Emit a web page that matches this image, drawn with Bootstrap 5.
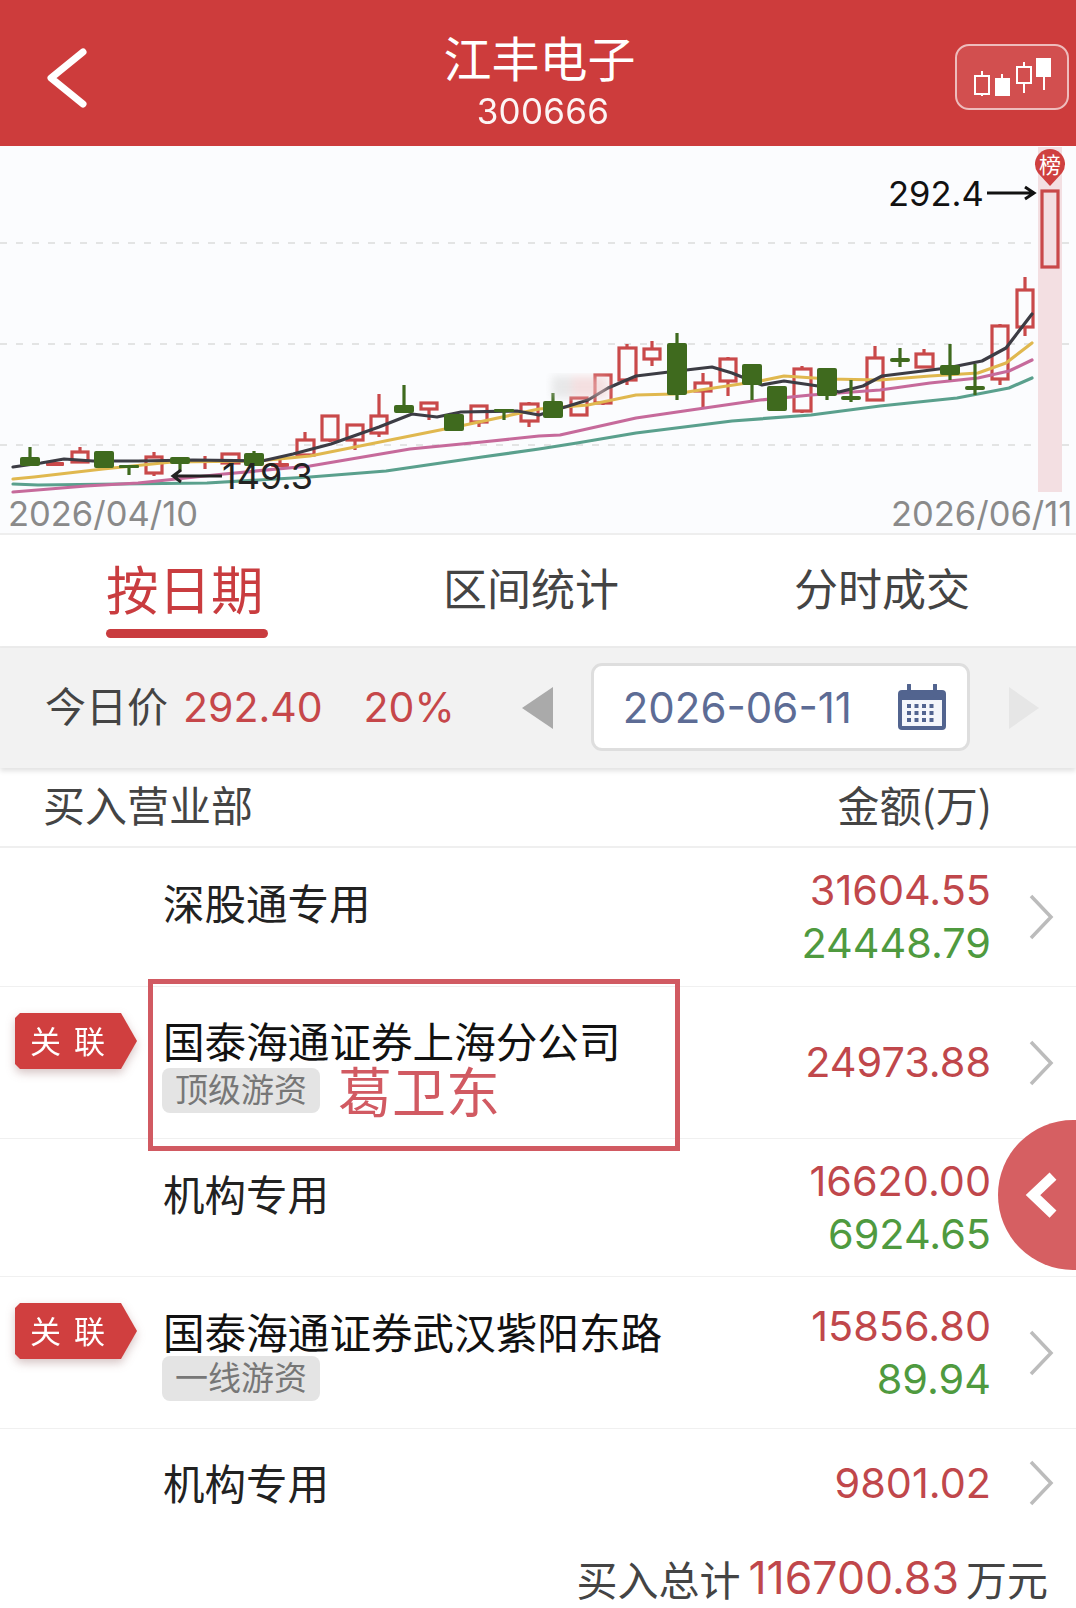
<!DOCTYPE html>
<html lang="zh">
<head>
<meta charset="utf-8">
<title>江丰电子</title>
<link href="https://cdn.jsdelivr.net/npm/bootstrap@5.3.0/dist/css/bootstrap.min.css" rel="stylesheet">
<style>
html,body{margin:0;background:#fff}
body{width:1076px;height:1608px;overflow:hidden;position:relative;font-family:Inter,"Noto Sans CJK SC",sans-serif;color:#222}
.top-bar{height:146px;background:#cd3c3c;color:#fff;position:relative}
.back-ic{margin-left:46px;margin-top:10px;width:44px;height:60px}
.title-box{position:absolute;left:0;right:0;top:26px;text-align:center}
.title-main{font-size:48px;line-height:60px;margin-left:3px;font-family:"Noto Sans CJK SC",sans-serif}
.title-code{font-size:35px;line-height:40px;margin-top:5px;margin-left:10px;letter-spacing:.3px;opacity:.95}
.kline-btn{margin-left:auto;margin-right:7px;width:114px;height:66px;border:2px solid #eebcbc;border-radius:14px;background:rgba(255,255,255,.1);margin-top:8px;position:relative;z-index:1}
.chart-wrap{height:389px;background:#fbfcfe;border-bottom:2px solid #eeeeee}
.chart-wrap svg{display:block}
.chart-wrap text{font-family:Inter,sans-serif}
.tab-bar{height:113px;background:#fff;border-bottom:2px solid #ececec}
.tab-item{position:absolute;font-size:44px;line-height:60px;top:557px;color:#444;font-family:"Noto Sans CJK SC",sans-serif}
.tab-on{left:106px;font-size:52.5px;line-height:60px;color:#c93c3f}
.tab-on::after{content:"";position:absolute;left:0;right:-4px;top:72px;height:9px;border-radius:5px;background:#c93c3f}
.tab-two{left:443px}
.tab-three{left:794px}
.price-bar{height:120px;background:#f2f2f2;box-shadow:0 3px 5px rgba(0,0,0,.12);position:relative;padding-left:45px}
.price-lbl{font-size:41px;color:#444;font-family:"Noto Sans CJK SC",sans-serif;margin-bottom:6px}
.price-val{font-size:41px;color:#c6474a;margin-left:15px}
.price-pct{font-size:41px;color:#c6474a;margin-left:41px}
.tri-l{width:0;height:0;border-top:21px solid transparent;border-bottom:21px solid transparent;border-right:31px solid #aaa;margin-left:67px}
.tri-r{width:0;height:0;border-top:21px solid transparent;border-bottom:21px solid transparent;border-left:30px solid #e6e6e6;margin-left:39px}
.date-box{width:379px;height:88px;margin-left:38px;background:#fff;border:3px solid #dedede;border-radius:11px;padding-left:29px;padding-right:21px;margin-bottom:2px}
.date-txt{font-size:42px;color:#5d6c95}
.head-row{height:80px;padding:0 84px 8px 43px;font-size:42px;color:#444;border-bottom:2px solid #efefef;font-family:"Noto Sans CJK SC",sans-serif}
.broker{border:0;border-bottom:2px solid #f0f0f0;border-radius:0;padding:0;padding-right:22px;position:relative;background:#fff}
.h139{height:139px}.h152{height:152px}.h138{height:138px}.h108{height:108px}
.lead-col{width:163px;flex:none;align-self:flex-start}
.assoc{width:122px;height:56px;margin-left:15px;margin-top:26px;filter:drop-shadow(0 4px 5px rgba(120,60,60,.3))}
.assoc-in{width:122px;height:56px;background:#d03f3f;color:#fff;font-size:31px;line-height:54px;padding-left:15px;clip-path:polygon(5px 0,106px 0,122px 28px,106px 56px,5px 56px,0 51px,0 5px);font-family:"Noto Sans CJK SC",sans-serif;word-spacing:6px}
.bk-name{font-size:41.5px;line-height:50px;color:#222;font-family:"Noto Sans CJK SC",sans-serif;white-space:nowrap}
.bk-up{margin-bottom:30px}
.bk-up-s{margin-bottom:2px}
.bk-long{font-size:41.6px;color:#111;margin-top:28px;line-height:50px}
.bk-long-b{margin-top:29px}
.bk-tag{width:158px;height:45px;background:#e4e4e4;border-radius:8px;color:#777;font-size:33px;line-height:41px;text-align:center;font-family:"Noto Sans CJK SC",sans-serif;margin-left:-1px;flex:none}
.bk-who{font-size:54px;line-height:50px;color:#d15a62;margin-left:18px;font-family:"Noto Sans CJK SC",sans-serif}
.num-col{margin-left:auto;text-align:right;font-size:41.4px;line-height:53px;flex:none}
.num-r{color:#c0474b}
.num-g{color:#4f9a3f}
.chev{width:26px;height:48px;margin-left:37px;flex:none}
.sum-row{height:71px;padding-right:28px;padding-top:12px;font-size:41px;color:#444;font-family:"Noto Sans CJK SC",sans-serif}
.sum-val{font-family:Inter,sans-serif;color:#c0474b;font-size:44.6px;margin:0 7px 0 8px}
.mark-box{position:absolute;left:148px;top:979px;width:532px;height:172px;border:5px solid #d15a62;pointer-events:none}
.float-tab{position:absolute;right:0;top:1120px;width:78px;height:150px;border-radius:75px 0 0 75px;background:#d65f62}
</style>
</head>
<body>
<header class="top-bar d-flex align-items-center">
  <svg class="back-ic" viewBox="0 0 44 60"><path d="M37 4 5 30 37 56" fill="none" stroke="#fff" stroke-width="7" stroke-linecap="round" stroke-linejoin="round"/></svg>
  <div class="title-box">
    <div class="title-main">江丰电子</div>
    <div class="title-code">300666</div>
  </div>
  <div class="kline-btn">
    <svg width="110" height="62" viewBox="957 47 110 62">
      <g fill="none" stroke="#fff" stroke-width="2"><rect x="975" y="77" width="14" height="18"/><path d="M982 72v5M982 95v2M1024 63v5M1024 84v10M1044 78v13"/><rect x="1017" y="68" width="14" height="16"/></g>
      <rect x="995" y="79" width="15" height="18" fill="#fff"/><path d="M1002 75v4" stroke="#fff" stroke-width="2"/>
      <rect x="1036" y="59" width="15" height="19" fill="#fff"/>
    </svg>
  </div>
</header>

<section class="chart-wrap">
  <svg width="1076" height="387" viewBox="0 146 1076 387">
    <defs><filter id="smear"><feGaussianBlur stdDeviation="4"/></filter></defs>
    <g stroke="#dcdcdc" stroke-width="1.5" stroke-dasharray="7 9"><path d="M0 243H1038M1062 243H1076M0 344H1038M1062 344H1076M0 445H1038M1062 445H1076"/></g>
    <rect x="1038" y="147" width="24" height="345" fill="#f3dfe2"/>

    <g fill="none" stroke="#c9494a" stroke-width="3.2">
      <rect x="72" y="452" width="16" height="10"/><rect x="146" y="457" width="16" height="16"/><rect x="222" y="454" width="17" height="9"/>
      <rect x="297" y="440" width="17" height="15"/><rect x="322" y="416" width="16" height="24"/><rect x="347" y="425" width="16" height="15"/>
      <rect x="371" y="416" width="16" height="17"/><rect x="421" y="403" width="16" height="6"/><rect x="471" y="406" width="16" height="16"/>
      <rect x="521" y="404" width="17" height="17"/><rect x="571" y="398" width="16" height="17"/><rect x="595" y="375" width="16" height="28"/>
      <rect x="619" y="348" width="17" height="32"/><rect x="644" y="349" width="16" height="10"/><rect x="695" y="383" width="16" height="8"/>
      <rect x="720" y="359" width="16" height="22"/><rect x="794" y="369" width="17" height="42"/><rect x="867" y="358" width="16" height="42"/>
      <rect x="916" y="354" width="17" height="13"/><rect x="992" y="326" width="16" height="53"/><rect x="1017" y="290" width="16" height="37"/>
      <rect x="1042" y="191" width="16" height="76"/>
      <path d="M80 447v5M154 452v5M154 473v3M205 456v13M197 461h16M305 432v8M330 440v2M355 440v10M379 394v22M379 433v4M429 409v11M479 422v5M529 402v2M529 421v6M603 403v2M627 344v4M627 380v5M652 341v8M652 359v7M703 373v10M703 391v17M728 357v2M728 381v15M802 366v3M802 411v2M875 346v12M924 349v5M1000 324v2M1000 379v6M1025 277v13M1025 327v9M280 460v3"/>
    </g>
    <rect x="46" y="462" width="18" height="4" rx="1" fill="#c9494a"/>
    <rect x="271" y="463" width="18" height="4" rx="1" fill="#c9494a"/>

    <g fill="none" stroke-width="3.2" stroke-linejoin="round" stroke-linecap="round">
      <polyline stroke="#5aa08d" points="13,484 38,485 120,484 207,483 310,477 386,471 482,457 539,449 577,443 636,433 732,421 811,415 880,406 957,398 1009,388 1032,378"/>
      <polyline stroke="#c66a9b" points="13,492 86,486 138,483 224,474 310,466 410,449 482,442 539,436 560,435 636,418 684,411 760,400 811,395 880,390 930,383 978,378 1009,371 1032,360"/>
      <polyline stroke="#e0b84f" points="13,479 34,477 103,469 172,462 258,461 310,456 410,436 465,425 539,409 588,405 636,395 674,394 760,381 784,376 829,379 880,380 930,376 978,373 1006,363 1032,343"/>
      <polyline stroke="#3c3c44" points="13,467 41,463 64,459 93,461 138,461 193,460 262,461 293,454 331,444 379,427 412,414 437,417 461,412 517,411 539,415 588,400 608,388 636,376 669,372 712,367 732,373 762,385 784,381 818,386 839,392 863,386 882,376 947,368 982,361 1006,348 1032,314"/>
    </g>

    <g fill="#3f6a1e">
      <rect x="20" y="457" width="20" height="9" rx="2"/><rect x="94" y="451" width="20" height="17" rx="2"/><rect x="119" y="465" width="20" height="3" rx="1"/>
      <rect x="170" y="457" width="20" height="7" rx="2"/><rect x="244" y="453" width="20" height="13" rx="2"/><rect x="394" y="405" width="20" height="8" rx="2"/>
      <rect x="444" y="414" width="20" height="17" rx="2"/><rect x="494" y="409" width="20" height="3" rx="1"/><rect x="543" y="401" width="20" height="17" rx="2"/>
      <rect x="667" y="343" width="20" height="52" rx="2"/><rect x="742" y="364" width="20" height="21" rx="2"/><rect x="767" y="386" width="20" height="25" rx="2"/>
      <rect x="817" y="368" width="20" height="28" rx="2"/><rect x="841" y="396" width="20" height="4" rx="2"/><rect x="890" y="358" width="20" height="4" rx="2"/>
      <rect x="940" y="365" width="20" height="10" rx="2"/><rect x="965" y="386" width="20" height="4" rx="2"/>
    </g>
    <path stroke="#3f6a1e" stroke-width="3.2" fill="none" d="M30 447v10M129 468v7M180 464v7M254 451v2M404 385v20M504 412v8M553 393v8M677 333v10M677 395v5M752 385v15M827 396v4M851 380v22M900 348v19M950 344v36M975 364v31"/>

    <g filter="url(#smear)" opacity=".55"><rect x="552" y="376" width="20" height="22" fill="#d8d8d8"/><rect x="572" y="376" width="36" height="22" fill="#efc8c8"/></g>

    <path d="M1050 186 1038 173a15 15 0 1 1 24 0Z" fill="#cf4040"/>
    <text x="1050" y="173" text-anchor="middle" fill="#fff" font-size="22" style="font-family:'Noto Sans CJK SC',sans-serif">榜</text>

    <text x="888" y="206" font-size="34.5" fill="#111">292.4</text>
    <path d="M987 193H1032M1025 187l9 6-9 6" fill="none" stroke="#111" stroke-width="3"/>
    <text x="222" y="489" font-size="36" fill="#222">149.3</text>
    <path d="M222 476H174M181 470l-8 6 8 6" fill="none" stroke="#222" stroke-width="3"/>
    <text x="8" y="526" font-size="34.5" fill="#8a8a8a">2026/04/10</text>
    <text x="891" y="526" font-size="34.5" fill="#8a8a8a">2026/06/11</text>
  </svg>
</section>

<nav class="tab-bar">
  <span class="tab-item tab-on">按日期</span>
  <span class="tab-item tab-two">区间统计</span>
  <span class="tab-item tab-three">分时成交</span>
</nav>

<section class="price-bar d-flex align-items-center">
  <span class="price-lbl">今日价</span>
  <span class="price-val">292.40</span>
  <span class="price-pct">20%</span>
  <span class="tri-l"></span>
  <div class="date-box d-flex align-items-center justify-content-between">
    <span class="date-txt">2026-06-11</span>
    <svg width="48" height="46" viewBox="0 0 48 46"><rect x="0" y="6" width="48" height="40" rx="4" fill="#52648f"/><rect x="4" y="16" width="40" height="26" fill="#f4f6fa"/><path d="M11 1v11M37 1v11" stroke="#52648f" stroke-width="4" stroke-linecap="round"/><path d="M9 22h30M9 29h30M9 36h30" stroke="#52648f" stroke-width="4" stroke-dasharray="4 3.5"/></svg>
  </div>
  <span class="tri-r"></span>
</section>

<div class="head-row d-flex align-items-center justify-content-between">
  <span>买入营业部</span><span>金额(万)</span>
</div>

<div class="list-group list-group-flush">
  <div class="list-group-item broker h139 d-flex align-items-center">
    <div class="lead-col"></div>
    <div class="bk-name bk-up">深股通专用</div>
    <div class="num-col"><div class="num-r">31604.55</div><div class="num-g">24448.79</div></div>
    <svg class="chev" viewBox="0 0 26 48"><path d="M3 3 23 24 3 45" fill="none" stroke="#bcbcbc" stroke-width="3.5"/></svg>
  </div>
  <div class="list-group-item broker h152 d-flex align-items-center">
    <div class="lead-col"><div class="assoc"><div class="assoc-in">关 联</div></div></div>
    <div class="align-self-start">
      <div class="bk-name bk-long">国泰海通证券上海分公司</div>
      <div class="d-flex align-items-center"><span class="bk-tag">顶级游资</span><span class="bk-who">葛卫东</span></div>
    </div>
    <div class="num-col"><div class="num-r">24973.88</div></div>
    <svg class="chev" viewBox="0 0 26 48"><path d="M3 3 23 24 3 45" fill="none" stroke="#bcbcbc" stroke-width="3.5"/></svg>
  </div>
  <div class="list-group-item broker h138 d-flex align-items-center">
    <div class="lead-col"></div>
    <div class="bk-name bk-up">机构专用</div>
    <div class="num-col"><div class="num-r">16620.00</div><div class="num-g">6924.65</div></div>
    <svg class="chev" viewBox="0 0 26 48"><path d="M3 3 23 24 3 45" fill="none" stroke="#bcbcbc" stroke-width="3.5"/></svg>
  </div>
  <div class="list-group-item broker h152 d-flex align-items-center">
    <div class="lead-col"><div class="assoc"><div class="assoc-in">关 联</div></div></div>
    <div class="align-self-start">
      <div class="bk-name bk-long bk-long-b">国泰海通证券武汉紫阳东路</div>
      <div class="d-flex align-items-center"><span class="bk-tag">一线游资</span></div>
    </div>
    <div class="num-col"><div class="num-r">15856.80</div><div class="num-g">89.94</div></div>
    <svg class="chev" viewBox="0 0 26 48"><path d="M3 3 23 24 3 45" fill="none" stroke="#bcbcbc" stroke-width="3.5"/></svg>
  </div>
  <div class="list-group-item broker h108 d-flex align-items-center">
    <div class="lead-col"></div>
    <div class="bk-name bk-up-s">机构专用</div>
    <div class="num-col"><div class="num-r">9801.02</div></div>
    <svg class="chev" viewBox="0 0 26 48"><path d="M3 3 23 24 3 45" fill="none" stroke="#bcbcbc" stroke-width="3.5"/></svg>
  </div>
</div>

<div class="sum-row d-flex align-items-center justify-content-end">
  <span>买入总计</span><span class="sum-val">116700.83</span><span>万元</span>
</div>

<div class="mark-box"></div>
<div class="float-tab">
  <svg width="78" height="150" viewBox="0 0 78 150"><path d="M55 56 35 75 55 94" fill="none" stroke="#fff" stroke-width="10"/></svg>
</div>
</body>
</html>
